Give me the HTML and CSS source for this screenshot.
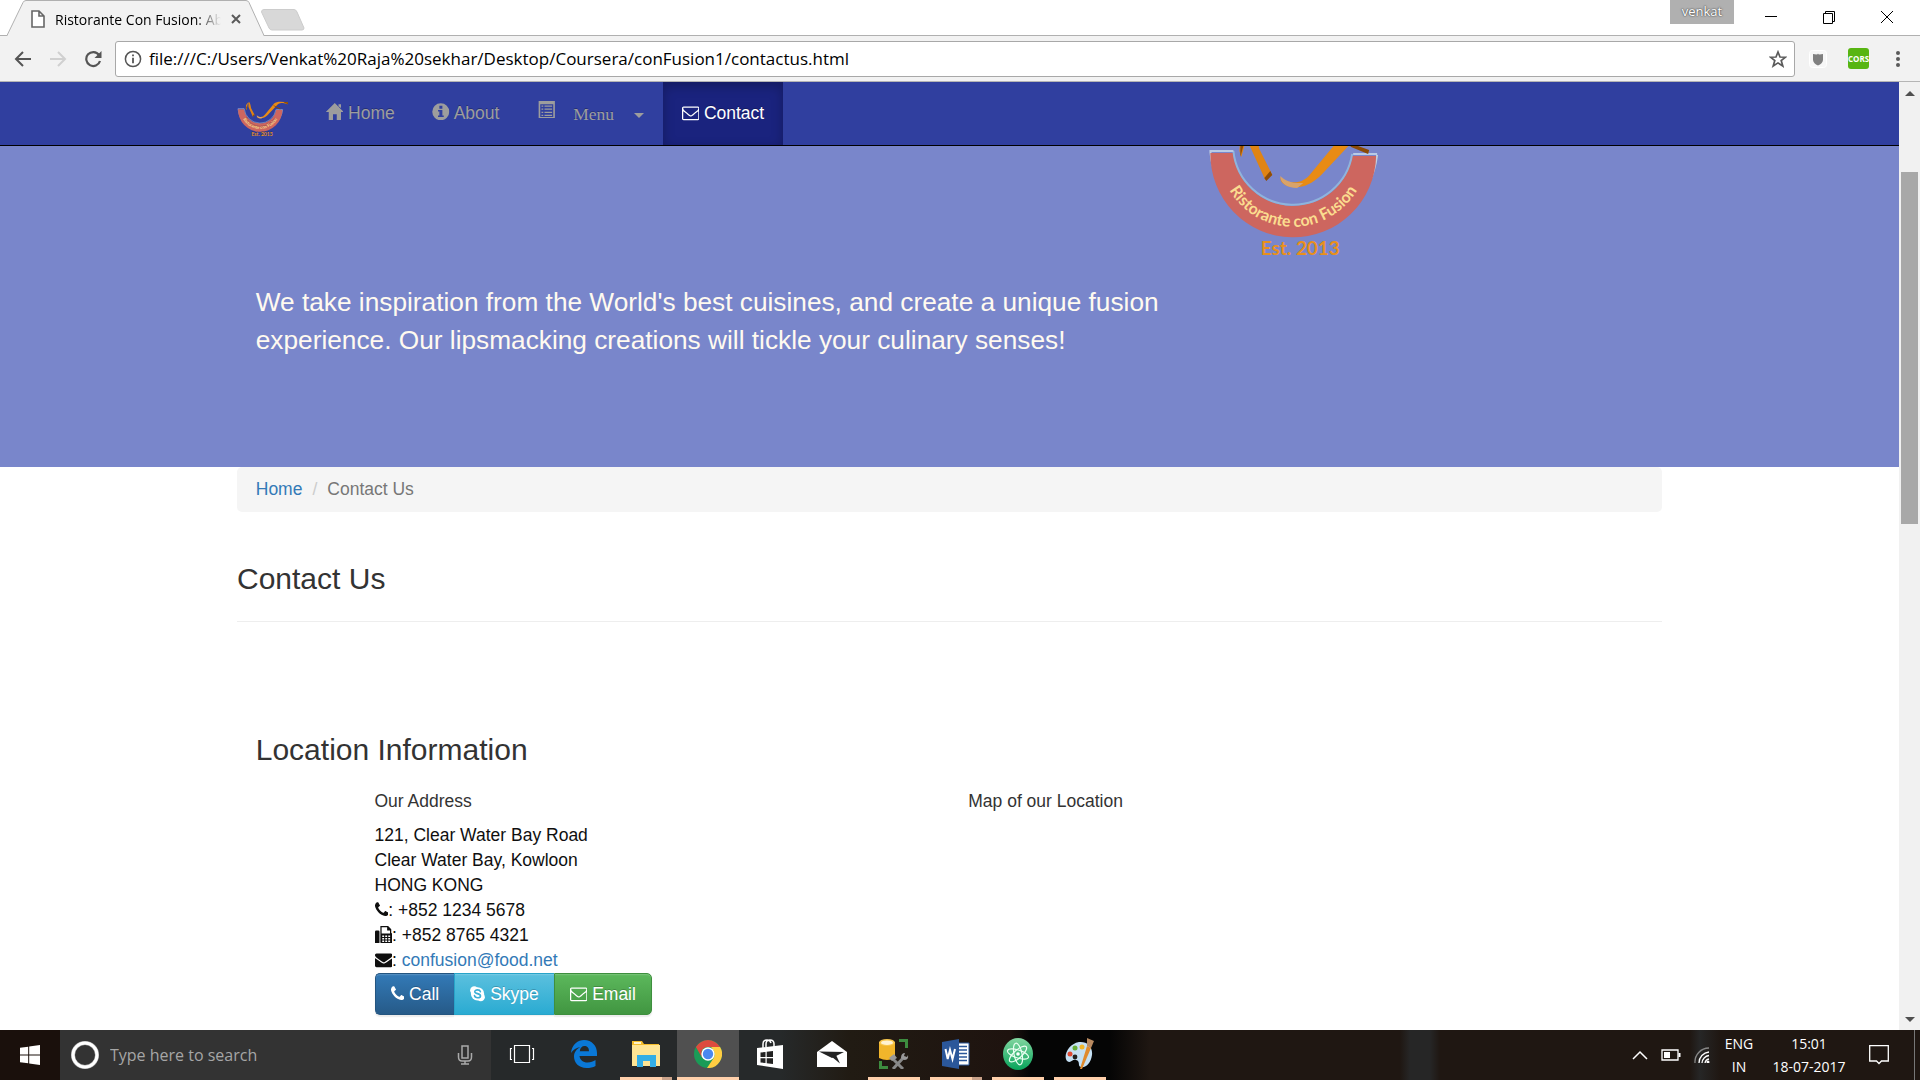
FILE: index.html
```html
<!DOCTYPE html>
<html lang="en">
<head>
<meta charset="utf-8">
<title>Ristorante Con Fusion: About Us</title>
<link rel="stylesheet" href="styles.css">
</head>
<body>
<svg class="defs" aria-hidden="true">
  <g id="logo">
    <path d="M31 17A84 85 0 0 0 198 20" fill="none" stroke="#c3cede" stroke-width="2"/>
    <path d="M31 18A83 83 0 0 0 197 21H173A60 59 0 0 1 54 18Z" fill="#cd665f"/>
    <path d="M54 16A60 60 0 0 0 173 19" fill="none" stroke="#8fb4dc" stroke-width="2"/>
    <path d="M30 16H54M174 19H198" stroke="#b9cbe6" stroke-width="2"/>
    <path d="M68-6 61 2 60 16 62 22 65 11 66 2 70-5 70 10 86 45 93 40 80 14 77 0 74-8Z" fill="#e08414"/>
    <path d="M61 6V22L64 11ZM85 43 91 36 93 40 87 46Z" fill="#8f4d08"/>
    <path d="M101 43C112 50 124 49 132 38L166-3C176-14 200-10 217-8L219 0 204-4C190-8 182-4 174 6L142 40C132 50 122 53 114 52 107 52 101 48 101 43Z" fill="#e88b14"/>
    <path d="M101 41C106 46 114 49 124 48L118 53C107 53 101 48 101 41Z" fill="#d9a36a"/>
    <path d="M160 0 176 10 190 15 189 19 172 12ZM200-10 219-8 219 0 206-5Z" fill="#8b4a05"/>
  </g>
  <path id="band" d="M40 18A74 74 0 0 0 188 18" fill="none"/>
  <symbol id="envelope-o" viewBox="0 0 1792 1792"><path d="M1664 1504v-768q-32 36-69 66-268 206-426 338-51 43-83 67t-86.5 48.5-102.5 24.5h-2q-48 0-102.5-24.5t-86.5-48.5-83-67q-158-132-426-338-37-30-69-66v768q0 13 9.5 22.5t22.5 9.5h1472q13 0 22.5-9.5t9.5-22.5zm0-1051v-24.5l-.5-13-3-12.5-5.5-9-9-7.5-14-2.5h-1472q-13 0-22.5 9.5t-9.5 22.5q0 168 147 284 193 152 401 317 6 5 35 29.5t46 37.5 44.5 31.5 50.5 27.5 43 9h2q20 0 43-9t50.5-27.5 44.5-31.5 46-37.5 35-29.5q208-165 401-317 54-43 100.5-115.5t46.5-131.5zm128-37v1088q0 66-47 113t-113 47h-1472q-66 0-113-47t-47-113v-1088q0-66 47-113t113-47h1472q66 0 113 47t47 113z"/></symbol>
  <symbol id="envelope" viewBox="0 0 1792 1792"><path d="M1792 710v794q0 66-47 113t-113 47h-1472q-66 0-113-47t-47-113v-794q44 49 101 87 362 246 497 345 57 42 92.5 65.5t94.5 48 110 24.5h2q51 0 110-24.5t94.5-48 92.5-65.5q170-123 498-345 57-39 100-87zm0-294q0 79-49 151t-122 123q-376 261-468 325-10 7-42.5 31t-54 38.5-52 32.5-57.5 27-50 9h-2q-23 0-50-9t-57.5-27-52-32.5-54-38.5-42.5-31q-91-64-262-182.5t-205-142.5q-62-42-117-115.5t-55-136.5q0-78 41.5-130t118.5-52h1472q65 0 112.5 47t47.5 113z"/></symbol>
  <symbol id="phone" viewBox="192 0 1408 1792"><path d="M1600 1240q0 27-10 70.5t-21 68.5q-21 50-122 106-94 51-186 51-27 0-53-3.5t-57.5-12.5-47-14.5-55.5-20.5-49-18q-98-35-175-83-127-79-264-216t-216-264q-48-77-83-175-3-9-18-49t-20.5-55.5-14.5-47-12.5-57.5-3.5-53q0-92 51-186 56-101 106-122 25-11 68.5-21t70.5-10q14 0 21 3 18 6 53 76 11 19 30 54t35 63.5 31 53.5q3 4 17.5 25t21.5 35.5 7 28.5q0 20-28.5 50t-62 55-62 53-28.5 46q0 9 5 22.5t8.5 20.5 14 24 11.5 19q76 137 174 235t235 174q2 1 19 11.5t24 14 20.5 8.5 22.5 5q18 0 46-28.5t53-62 55-62 50-28.5q14 0 28.5 7t35.5 21.5 25 17.5q25 15 53.5 31t63.5 35 54 30q70 35 76 53 3 7 3 21z"/></symbol>
  <symbol id="fax" viewBox="0 0 14 14"><path d="M1 3.500h1.600a1 1 0 0 1 1 1V13a1 1 0 0 1-1 1H1a1 1 0 0 1-1-1V4.500a1 1 0 0 1 1-1Z"/><path fill-rule="evenodd" d="M4.300 0H10.500L13 2.500V5.500Q14 5.800 14 7V12.500Q14 14 12.500 14H5.500Q4.300 14 4.300 12.800ZM5.300 1V6H12V3.500H9.700V1ZM5.800 7.500V8.700H7.300V7.500ZM8.200 7.500V8.700H9.700V7.500ZM10.600 7.500V8.700H12.100V7.500ZM5.800 9.500V10.700H7.300V9.500ZM8.200 9.500V10.700H9.700V9.500ZM10.600 9.500V10.700H12.100V9.500ZM5.800 11.500V12.700H7.300V11.500ZM8.200 11.500V12.700H9.700V11.500ZM10.600 11.500V12.700H12.100V11.500Z"/></symbol>
  <symbol id="skype" viewBox="0 0 12 14"><circle cx="6" cy="7" r="5.300"/><circle cx="3.400" cy="4.300" r="3.300"/><circle cx="8.600" cy="9.700" r="3.300"/><path d="M8.300 5.300C8 4.200 7 3.900 6 3.900 4.800 3.900 3.800 4.400 3.800 5.400 3.800 7.300 8.400 6.500 8.400 8.700 8.400 9.700 7.300 10.200 6.100 10.200 4.700 10.200 3.800 9.500 3.600 8.500" fill="none" stroke="#3cb0d7" stroke-width="1.300" stroke-linecap="round"/></symbol>
  <symbol id="home" viewBox="0 0 14 14"><path d="M7 0 14.200 7.200H12V14H8.600V9H5.600V14H2.200V7.200H-.2ZM10 1H12V4L10 2.500Z"/></symbol>
  <symbol id="info" viewBox="0 0 14 14"><path fill-rule="evenodd" d="M7 .2a6.800 6.800 0 1 1 0 13.600A6.800 6.800 0 0 1 7 .2ZM5.900 2.200V4.500H8.300V2.200ZM4.800 5.600V6.700H5.900V10H4.800V11.200H9.400V10H8.300V5.600Z"/></symbol>
  <symbol id="list" viewBox="0 0 14 14"><path fill-rule="evenodd" d="M.5 0H13.500V14H.5ZM1.800 2.500V12.800H12.200V2.500ZM2.800 3.500H4.200V4.500H2.800ZM5.200 3.500H11.300V4.500H5.200ZM2.800 6H4.200V7H2.800ZM5.200 6H11.300V7H5.200ZM2.800 8.500H4.200V9.500H2.800ZM5.200 8.500H11.300V9.500H5.200ZM2.800 11H4.200V12H2.800ZM5.200 11H11.300V12H5.200Z"/></symbol>
</svg>

<header class="titlebar">
  <div class="tab">
    <svg class="tab-shape" width="258" height="36" viewBox="0 0 258 36"><path d="M0 35.500 16 2.500Q17 .5 19 .5H239Q241 .5 242 2.500L257 35.500V37H0Z" fill="#f2f2f2" stroke="#b0b0b0"/></svg>
    <svg class="tab-file" width="14" height="18" viewBox="0 0 14 18"><path d="M1 1H8L13 6V17H1ZM8 1V6H13" fill="#fff" stroke="#666" stroke-width="1.600"/></svg>
    <span class="tab-title">Ristorante Con Fusion: About Us</span>
    <button class="plain" aria-label="Close tab"><svg width="10" height="10" viewBox="0 0 10 10"><path d="M1 1 9 9M9 1 1 9" stroke="#5a5a5a" stroke-width="2"/></svg></button>
  </div>
  <button class="plain newtab" aria-label="New tab"><svg width="44" height="22" viewBox="0 0 44 22"><path d="M3 .5H33Q35 .5 36 3L43 19Q43 21 41 21H11Q9 21 8 19L.5 3Q.5.5 3 .5Z" fill="#d8d8d8" stroke="#ccc"/></svg></button>
  <div class="window-controls">
    <span class="user">venkat</span>
    <button class="plain" aria-label="Minimise"><svg width="14" height="14" viewBox="0 0 14 14"><path d="M1 6.500H13" stroke="#000"/></svg></button>
    <button class="plain" aria-label="Restore"><svg width="14" height="14" viewBox="0 0 14 14"><path d="M1.500 3.500H10.500V13.500H1.500ZM3.500 3V1.500H12.500V11.500H11" fill="none" stroke="#000"/></svg></button>
    <button class="plain" aria-label="Close"><svg width="14" height="14" viewBox="0 0 14 14"><path d="M1 1 13 13M13 1 1 13" stroke="#000"/></svg></button>
  </div>
</header>

<div class="toolbar">
  <button class="plain" aria-label="Back"><svg width="18" height="18" viewBox="0 0 18 18"><path d="M17 9H2M9 2 2 9 9 16" fill="none" stroke="#555" stroke-width="2"/></svg></button>
  <button class="plain" aria-label="Forward"><svg width="18" height="18" viewBox="0 0 18 18"><path d="M1 9H16M9 2 16 9 9 16" fill="none" stroke="#d0d0d0" stroke-width="2"/></svg></button>
  <button class="plain" aria-label="Reload"><svg width="18" height="18" viewBox="0 0 18 18"><path d="M15 5A7 7 0 1 0 16 11" fill="none" stroke="#555" stroke-width="2.200"/><path d="M17.500 1V8H10.500Z" fill="#555"/></svg></button>
  <div class="address-bar">
    <svg width="18" height="18" viewBox="0 0 18 18"><circle cx="9" cy="9" r="7.600" fill="none" stroke="#555" stroke-width="1.500"/><path d="M8.100 4.500H9.900V6.300H8.100ZM8.100 7.700H9.900V13.200H8.100Z" fill="#555"/></svg>
    <input class="url" aria-label="Address" value="file:///C:/Users/Venkat%20Raja%20sekhar/Desktop/Coursera/conFusion1/contactus.html">
    <button class="plain" aria-label="Bookmark"><svg width="18" height="18" viewBox="0 0 18 18"><path d="M9 2 11 7 16.500 7.200 12.200 10.600 13.800 16 9 12.900 4.200 16 5.800 10.600 1.500 7.200 7 7Z" fill="none" stroke="#5a5a5a" stroke-width="1.700"/></svg></button>
  </div>
  <svg width="18" height="18" viewBox="0 0 18 18"><rect x=".5" y=".5" width="17" height="17" rx="3" fill="#f7f7f7" stroke="#fff"/><path d="M4 4Q9 5 9 3.500 9 5 14 4V10Q13.500 13.500 9 15.500 4.500 13.500 4 10Z" fill="#808080"/></svg>
  <span class="cors">CORS</span>
  <button class="plain" aria-label="Browser menu"><svg width="6" height="18" viewBox="0 0 6 18"><g fill="#5a5a5a"><circle cx="3" cy="3" r="2"/><circle cx="3" cy="9" r="2"/><circle cx="3" cy="15" r="2"/></g></svg></button>
</div>

<div class="viewport">
  <div class="page">
    <nav class="navbar">
      <div class="container nav-row">
        <a class="brand" href="#" aria-label="Ristorante con Fusion"><svg width="41" height="30" viewBox="27 -12 192 139">
          <use href="#logo"/>
          <text class="logo-name" text-anchor="middle"><textPath href="#band" startOffset="50%">Ristorante con Fusion</textPath></text>
          <text class="logo-est" x="121" y="120" text-anchor="middle">Est. 2013</text>
        </svg></a>
        <ul class="nav">
          <li><a href="#"><svg class="glyphicon" width="14" height="14"><use href="#home"/></svg> Home</a></li>
          <li><a href="#"><svg class="glyphicon" width="14" height="14"><use href="#info"/></svg> About</a></li>
          <li><a class="dropdown" href="#"><svg width="14" height="14"><use href="#list"/></svg><span class="menu-label">Menu</span><span class="caret"></span></a></li>
          <li><a class="active" href="#"><svg class="fa" width="14" height="14"><use href="#envelope-o"/></svg> Contact</a></li>
        </ul>
      </div>
    </nav>
    <header class="hero">
      <div class="container grid">
        <p class="lead">We take inspiration from the World's best cuisines, and create a unique fusion experience. Our lipsmacking creations will tickle your culinary senses!</p>
        <svg class="hero-logo" width="154" height="111" viewBox="27 -12 192 139">
          <use href="#logo"/>
          <text class="logo-name" text-anchor="middle"><textPath href="#band" startOffset="50%">Ristorante con Fusion</textPath></text>
          <text class="logo-est" x="121" y="120" text-anchor="middle">Est. 2013</text>
        </svg>
      </div>
    </header>
    <main class="container body">
      <ol class="breadcrumb">
        <li><a href="#">Home</a></li>
        <li>Contact Us</li>
      </ol>
      <h3>Contact Us</h3>
      <hr>
      <section class="location">
        <h3 class="section-title">Location Information</h3>
        <div class="grid">
          <div class="address">
            <h5>Our Address</h5>
            <address>
              121, Clear Water Bay Road<br>
              Clear Water Bay, Kowloon<br>
              HONG KONG<br>
              <svg class="fa" width="11" height="14"><use href="#phone"/></svg>: +852 1234 5678<br>
              <svg class="fa" width="14" height="14"><use href="#fax"/></svg>: +852 8765 4321<br>
              <svg class="fa" width="14" height="14"><use href="#envelope"/></svg>: <a href="#">confusion@food.net</a>
            </address>
            <div class="btn-group">
              <button class="btn call"><svg class="fa" width="11" height="14"><use href="#phone"/></svg> Call</button>
              <button class="btn skype"><svg class="fa" width="12" height="14"><use href="#skype"/></svg> Skype</button>
              <button class="btn email"><svg class="fa" width="14" height="14"><use href="#envelope-o"/></svg> Email</button>
            </div>
          </div>
          <div class="map"><h5>Map of our Location</h5></div>
        </div>
      </section>
    </main>
  </div>
  <div class="scrollbar">
    <svg width="10" height="5" viewBox="0 0 10 5"><path d="M0 5 5 0 10 5Z" fill="#505050"/></svg>
    <div class="track"><div class="thumb"></div></div>
    <svg width="10" height="5" viewBox="0 0 10 5"><path d="M0 0 5 5 10 0Z" fill="#505050"/></svg>
  </div>
</div>

<footer class="taskbar">
  <button class="plain start" aria-label="Start"><svg width="20" height="20" viewBox="0 0 20 20"><path d="M0 2.800 8.200 1.700V9.500H0ZM9.200 1.500 20 0V9.500H9.200ZM0 10.500H8.200V18.300L0 17.200ZM9.200 10.500H20V20L9.200 18.500Z" fill="#fff"/></svg></button>
  <div class="search">
    <svg width="30" height="30" viewBox="0 0 30 30"><circle cx="15" cy="15" r="12" fill="none" stroke="#aaa" stroke-width="4"/><circle cx="15" cy="15" r="12" fill="none" stroke="#fff" stroke-width="3"/></svg>
    <input aria-label="Search" placeholder="Type here to search">
    <svg width="16" height="20" viewBox="0 0 16 20"><path d="M5 1H11V13H5ZM1.500 8V12Q1.500 16 5 16H11Q14.500 16 14.500 12V8M8 16V19M4 19H12" fill="none" stroke="#aaa" stroke-width="1.500"/></svg>
  </div>
  <button class="task" aria-label="Task view"><svg width="26" height="20" viewBox="0 0 26 20"><path d="M5.500 1.500H20.500V18.500H5.500ZM3 4.500H1.500V15.500H3M23 4.500H24.500V15.500H23" fill="none" stroke="#fff" stroke-width="1.200"/></svg></button>
  <button class="task" aria-label="Edge"><svg width="26" height="28" viewBox="0 0 26 28"><path d="M0 13C1 4 7 0 13 0 21 0 26 6 26 13V16H8.500C9 20 12 22.500 16.500 22.500 20 22.500 22 21.500 24.500 20V26C22 27.500 19 28 15.500 28 8 28 3 23 3 16.500 3 12.500 5.500 9 9.500 7 5.500 7.500 2 10 0 13ZM8.800 11.200H18C18 7.500 16 6 13.500 6 11 6 9 8 8.800 11.200Z" fill="#0a78d7"/></svg></button>
  <button class="task open stack" aria-label="File Explorer"><svg width="28" height="26" viewBox="0 0 28 26"><path d="M0 0H10L12 3H27V8H0Z" fill="#f5bd2b"/><path d="M0 4H28V25H0Z" fill="#ffe594"/><path d="M2 1H9V3H2Z" fill="#fff3c8"/><path d="M5 14H24V26H18V20H11V26H5Z" fill="#33aee6"/></svg></button>
  <button class="task open current" aria-label="Chrome"><svg width="28" height="28" viewBox="0 0 28 28"><circle cx="14" cy="14" r="14" fill="#1a9b57"/><path d="M1.900 7A14 14 0 0 1 26.100 7H14Q9 7 7.500 11.500L7.900 17.500Z" fill="#dd4b3e"/><path d="M26.100 7A14 14 0 0 1 13 28L20 17.500Q22 12 17 7Z" fill="#ffcd42"/><circle cx="14" cy="14" r="6.700" fill="#fff"/><circle cx="14" cy="14" r="5.200" fill="#4a88f0"/></svg></button>
  <button class="task" aria-label="Store"><svg width="26" height="30" viewBox="0 0 26 30"><path d="M0 9 26 6V30L0 26Z" fill="#fff"/><path d="M6 9V5Q6 1 10 1 13 1 14 4M9 8V5Q9 1 13 1 17 1 17 5V8" fill="none" stroke="#fff" stroke-width="1.500"/><path d="M3.500 13.500 8.500 13V18H3.500ZM9.700 12.800 16 12V18H9.700ZM3.500 19.200H8.500V24L3.500 23.500ZM9.700 19.200H16V25L9.700 24.200Z" fill="#222"/></svg></button>
  <button class="task" aria-label="Mail"><svg width="30" height="26" viewBox="0 0 30 26"><path d="M0 11 15 0 30 11V26H0Z" fill="#fff"/><path d="M2 10.500 27 11 15 17Z" fill="#222"/><path d="M15 16 23 22.500 19 14Z" fill="#222"/></svg></button>
  <button class="task open" aria-label="Database tools"><svg width="30" height="30" viewBox="0 0 30 30"><path d="M0 3V19Q8 23 16 19V3Z" fill="#f1b52b"/><ellipse cx="8" cy="3.500" rx="8" ry="3.500" fill="#f7c64d"/><ellipse cx="8" cy="3.700" rx="6" ry="2.300" fill="#fff2d2"/><path d="M20 0H29V9H26V3H20ZM0 22H3V27H9V30H0Z" fill="#3d8c3f"/><path d="M12 18 24 30M25 18 14 30" stroke="#888" stroke-width="3"/><path d="M10 19 15 15 18 19 13 22ZM22 19Q22 14 26 14L25 17 28 18 29 16Q30 21 25 21Z" fill="#999"/></svg></button>
  <button class="task open stack" aria-label="Word"><svg width="28" height="30" viewBox="0 0 28 30"><path d="M14 4H27V26H14Z" fill="#fff" stroke="#2b579a"/><path d="M15 7.500H25M15 11H25M15 14.500H25M15 18H25M15 21.500H25" stroke="#2b579a" stroke-width="1.600"/><path d="M0 3 17 0V30L0 27Z" fill="#2b579a"/><path d="M3.500 10 5.700 20 8 11 10.500 20 13 10" fill="none" stroke="#fff" stroke-width="2"/></svg></button>
  <button class="task open" aria-label="Atom"><svg width="30" height="32" viewBox="0 0 30 32"><defs><linearGradient id="atom" x2="0" y2="1"><stop stop-color="#82d6a0"/><stop offset="1" stop-color="#08a45b"/></linearGradient></defs><ellipse cx="15" cy="16" rx="15" ry="16" fill="url(#atom)"/><g fill="none" stroke="#eafff2" stroke-width="1.200"><ellipse cx="15" cy="16" rx="4" ry="11" transform="rotate(-12 15 16)"/><ellipse cx="15" cy="16" rx="4" ry="11" transform="rotate(48 15 16)"/><ellipse cx="15" cy="16" rx="4" ry="11" transform="rotate(108 15 16)"/></g><circle cx="15" cy="16" r="1.800" fill="#fff"/></svg></button>
  <button class="task open" aria-label="Paint"><svg width="30" height="32" viewBox="0 0 30 32"><path d="M14 4C22 3 28 9 27 17 26 25 21 30 16 29 12 28 16 23 11 22 7 21 6 26 2 23-2 18 3 6 14 4Z" fill="#c5e0f4"/><circle cx="5" cy="16" r="2.500" fill="#e04a34"/><circle cx="10" cy="10" r="2.500" fill="#68ae3a"/><circle cx="17" cy="9" r="2.500" fill="#f1b72a"/><circle cx="10" cy="19" r="2.400" fill="#222"/><path d="M22 8 26 10 17 31 15 31Z" fill="#e08a2d"/><path d="M22 0 29 3 26 10 22 8Z" fill="#b98a60"/></svg></button>
  <div class="tray">
    <svg width="16" height="12" viewBox="0 0 16 12"><path d="M1 10 8 3 15 10" fill="none" stroke="#fff" stroke-width="1.500"/></svg>
    <svg width="20" height="12" viewBox="0 0 20 12"><path d="M1 1H17V11H1Z" fill="none" stroke="#fff" stroke-width="1.300"/><path d="M3 3H9V9H3ZM17.500 4H19.500V8H17.500Z" fill="#fff"/></svg>
    <svg width="16" height="16" viewBox="0 0 16 16"><g fill="none" stroke-width="1.300"><path d="M1 16A14 14 0 0 1 15 1" stroke="#888"/><path d="M5 16A11 11 0 0 1 15 5M8 16A8 8 0 0 1 15 8.500M11 16A5 5 0 0 1 15 12" stroke="#fff"/></g><circle cx="14" cy="15" r="1.500" fill="#fff"/></svg>
    <div class="lang">ENG<br>IN</div>
    <div class="clock">15:01<br>18-07-2017</div>
    <svg width="20" height="20" viewBox="0 0 20 20"><path d="M.7.700H19.300V16H12.500L10 18.500 7.500 16H.7Z" fill="none" stroke="#fff" stroke-width="1.300"/></svg>
    <span class="show-desktop"></span>
  </div>
</footer>
</body>
</html>
```
FILE: styles.css
```css
* { box-sizing: border-box; }
body {
  margin: 0;
  height: 100vh;
  display: flex;
  flex-direction: column;
  overflow: hidden;
  background: #fff;
  font-family: "Open Sans", "Noto Sans", sans-serif;
}
svg { flex: none; }
.defs { position: absolute; width: 0; height: 0; }
.plain {
  border: 0;
  padding: 0;
  background: none;
  display: flex;
  align-items: center;
}

/* window title bar */
.titlebar {
  flex: none;
  height: 36px;
  display: flex;
  align-items: flex-start;
  padding-left: 7px;
  border-bottom: 1px solid #b0b0b0;
}
.tab {
  position: relative;
  width: 254px;
  height: 36px;
  padding: 2px 20px 0 24px;
  display: flex;
  align-items: center;
}
.tab-shape { position: absolute; left: 0; top: 0; }
.tab-file { position: relative; }
.tab .plain { position: relative; }
.tab-title {
  position: relative;
  width: 166px;
  margin: 0 10px;
  overflow: hidden;
  white-space: nowrap;
  font-size: 14px;
  color: #000;
  -webkit-mask-image: linear-gradient(90deg, #000 140px, transparent 166px);
  mask-image: linear-gradient(90deg, #000 140px, transparent 166px);
}
.newtab { margin-top: 9px; }
.window-controls {
  margin-left: auto;
  padding-right: 26px;
  display: flex;
  gap: 44px;
}
.window-controls .plain { margin-top: 10px; }
.user {
  width: 64px;
  height: 24px;
  margin-right: -14px;
  background: #b0b0b0;
  color: #fff;
  font-size: 13px;
  line-height: 22px;
  text-align: center;
  text-shadow: 0 0 2px #444, 0 0 1px #444;
}

/* address toolbar */
.toolbar {
  flex: none;
  height: 46px;
  display: flex;
  align-items: center;
  gap: 17px;
  padding: 0 19px 0 14px;
  background: #f2f2f2;
  border-bottom: 1px solid #b5b5b5;
}
.address-bar {
  flex: 1;
  height: 36px;
  margin: 0 -3px 0 -4px;
  padding: 0 7px 0 8px;
  display: flex;
  align-items: center;
  gap: 7px;
  background: #fff;
  border: 1px solid #a8a8a8;
  border-radius: 3px;
}
.url {
  flex: 1;
  border: 0;
  padding: 0;
  background: none;
  font: 17px "Open Sans", "Noto Sans", sans-serif;
  color: #000;
}
.cors {
  width: 21px;
  height: 21px;
  margin: 0 9px 0 4px;
  border-radius: 3px;
  background: #58b512;
  color: #fff;
  font-size: 8px;
  font-weight: 700;
  line-height: 21px;
  text-align: center;
}

/* browser viewport and the page shown at 125% */
.viewport {
  flex: 1;
  min-height: 0;
  display: flex;
}
.page {
  flex: 1;
  min-width: 0;
  overflow: hidden;
  zoom: 1.25;
  font: 14px/20px "Liberation Sans", Arial, sans-serif;
  color: #333;
}
.page a { color: #337ab7; text-decoration: none; }
.page svg { fill: currentColor; }
.logo-name { font: 700 16px Lato, sans-serif; fill: #fbdc8f; }
.logo-est { font: 700 19px Lato, sans-serif; fill: #e8901c; }
.container {
  max-width: 1170px;
  margin: 0 auto;
  padding: 0 15px;
}
.grid { display: grid; grid-template-columns: repeat(12, 1fr); }
.fa { vertical-align: -2px; }
.glyphicon { vertical-align: -1px; }

.navbar { background: #303f9f; border-bottom: 1px solid #000; }
.nav-row { display: flex; height: 50px; padding: 0; }
.page .nav-row a {
  display: block;
  height: 50px;
  padding: 15px;
  color: #9d9d9d;
  text-shadow: 0 -1px 0 rgba(0, 0, 0, .25);
}
.nav {
  display: flex;
  margin: 0;
  padding: 0;
  list-style: none;
}
.page .nav .dropdown { display: flex; padding: 16px 15px 0 16px; }
.dropdown svg { margin-top: -1px; }
.menu-label {
  margin: 0 16px 0 14px;
  font-family: "Liberation Serif", "Times New Roman", serif;
}
.caret {
  margin-top: 9px;
  height: 4px;
  border: 4px solid transparent;
  border-top-color: #9d9d9d;
  border-bottom: 0;
}
.page .nav .active {
  background: #1a237e;
  color: #fff;
  box-shadow: inset 0 3px 9px rgba(0, 0, 0, .25);
}

.hero { background: #7986cb; height: 257px; overflow: hidden; }
.lead {
  grid-column: 1 / 9;
  margin: 0;
  padding: 111px 15px 0;
  font-size: 21px;
  line-height: 30px;
  color: floralwhite;
}
.hero-logo { grid-column: 9 / 13; margin: -18px 0 0 15px; }

.breadcrumb {
  display: flex;
  margin: 0 0 41px;
  padding: 8px 15px;
  list-style: none;
  background: #f5f5f5;
  border-radius: 4px;
  color: #777;
}
.breadcrumb li + li::before { content: "/"; padding: 0 8px; color: #ccc; }
h3 {
  margin: 0 0 20px;
  font-size: 24px;
  font-weight: 500;
  line-height: 26px;
}
hr { margin: 0 0 90px; border: 0; border-top: 1px solid #eee; }
.section-title { margin: 0 15px 20px; }
h5 {
  margin: 0 0 10px;
  font-size: 14px;
  font-weight: 500;
  line-height: 15px;
}
.address { grid-column: 2 / 7; padding: 0 15px; }
.map { grid-column: 7 / 13; padding: 0 15px; }
address { font-style: normal; color: #0f0f0f; }
.btn-group { display: flex; }
.btn {
  height: 34px;
  padding: 0 12px;
  border: 1px solid;
  font: inherit;
  color: #fff;
  text-shadow: 0 -1px 0 rgba(0, 0, 0, .2);
  box-shadow: inset 0 1px 0 rgba(255, 255, 255, .15), 0 1px 1px rgba(0, 0, 0, .08);
}
.call {
  border-color: #245580;
  border-right: 0;
  border-radius: 4px 0 0 4px;
  background: linear-gradient(#337ab7, #265a88);
}
.skype {
  border-color: #28a4c9;
  border-right: 0;
  background: linear-gradient(#5bc0de, #2aabd2);
}
.email {
  border-color: #3e8f3e;
  border-radius: 0 4px 4px 0;
  background: linear-gradient(#5cb85c, #419641);
}

.scrollbar {
  width: 21px;
  padding: 9px 0 8px;
  display: flex;
  flex-direction: column;
  align-items: center;
  background: #f1f1f1;
}
.track { flex: 1; width: 17px; padding: 76px 0 0; }
.thumb { height: 352px; background: #a8a8a8; }

/* desktop taskbar */
.taskbar {
  flex: none;
  height: 50px;
  display: flex;
  background: linear-gradient(90deg, #1a100c 0 60px, #26292a 490px 780px, #211b13 850px, #1e130f 1010px, #050505 1030px 1110px, #1f1712 1150px 1400px, #262626 1410px 1430px, #1f1712 1440px 1690px, #262626 1700px, #1f1712 1720px);
  color: #fff;
}
.start { width: 60px; justify-content: center; }
.search {
  width: 431px;
  padding: 0 18px 0 10px;
  display: flex;
  align-items: center;
  gap: 10px;
  background: #333;
}
.search input {
  flex: 1;
  border: 0;
  padding: 0;
  background: none;
  font: 16px "Open Sans", "Noto Sans", sans-serif;
}
.search input::placeholder { color: #a6a6a6; }
.task {
  width: 52px;
  margin: 0 5px;
  padding: 0;
  border: 0;
  border-bottom: 3px solid transparent;
  background: none;
  display: flex;
  align-items: center;
  justify-content: center;
}
.open { border-bottom-color: #ffd0ab; }
.stack { border-image: linear-gradient(90deg, #ffd0ab 40px, #c9a28a 40px) 3; border-style: solid; border-width: 0 0 3px; }
.current { width: 62px; margin: 0; background: #505050; }
.tray {
  margin-left: auto;
  display: flex;
  align-items: center;
  font-size: 14px;
  line-height: 23px;
  text-align: center;
}
.tray svg { margin-right: 13px; }
.lang { width: 32px; }
.clock { width: 84px; margin: 0 18px 0 12px; white-space: nowrap; }
.show-desktop {
  height: 50px;
  width: 6px;
  margin-left: 12px;
  border-left: 1px solid #777;
}
```
